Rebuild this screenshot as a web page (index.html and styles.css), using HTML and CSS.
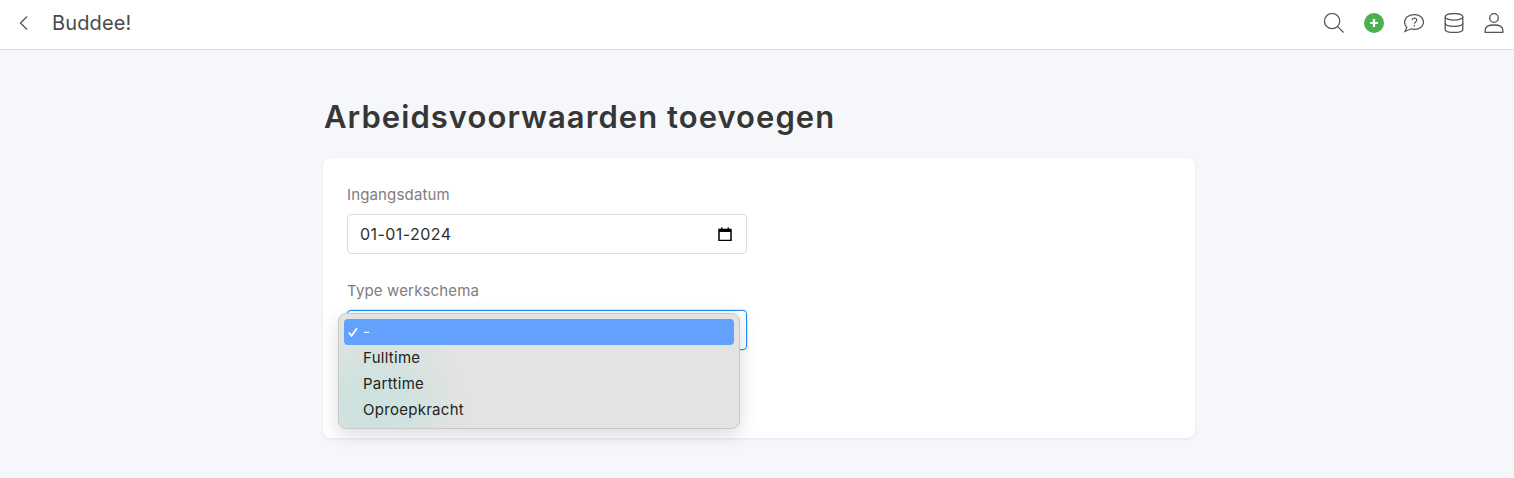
FILE: index.html
```html
<!DOCTYPE html>
<html lang="nl">
<head>
    <meta charset="UTF-8">
    <meta name="viewport" content="width=device-width, initial-scale=1.0">
    <title>Arbeidsvoorwaarden toevoegen</title>
    <link rel="stylesheet" href="styles.css">
</head>
<body>
    <header class="topbar">
        <div class="topbar-left">
            <svg class="back-icon" width="12" height="16" viewBox="0 0 12 16" fill="none" stroke="#555" stroke-width="1.3"><path d="M9 1.500 2.500 8 9 14.500"/></svg>
            <span class="app-name">Buddee!</span>
        </div>
        <div class="topbar-icons">
            <svg viewBox="2 2 21 21" fill="none" stroke="#555" stroke-width="1.3"><circle cx="10.500" cy="10.500" r="8"/><path d="M16.300 16.300 22.500 22.500"/></svg>
            <svg viewBox="2 2 20 20"><circle cx="12" cy="12" r="10" fill="#4caf50"/><path d="M12 8v8M8 12h8" stroke="#fff" stroke-width="2.2"/></svg>
            <svg viewBox="2 2 20 20" fill="none" stroke="#555" stroke-width="1.2"><path d="M12.500 3.700c5.300 0 9 3.200 9 7.300s-3.700 7.300-9 7.300c-1.200 0-2.300-.2-3.300-.5L3 20.500l1.800-4.300C3.400 14.800 2.500 13 2.500 11c0-4.100 4.200-7.300 10-7.300z"/><path d="M10 9.200c.2-1.300 1.200-2 2.400-2 1.300 0 2.300.8 2.300 2 0 1.700-2.300 1.800-2.300 3.600"/><path d="M12.400 14v1.400"/></svg>
            <svg viewBox="2 2 20 20" fill="none" stroke="#555" stroke-width="1.3"><ellipse cx="12" cy="5.800" rx="8.800" ry="3.300"/><path d="M3.200 5.800v12.400c0 2 3.900 3.300 8.800 3.300s8.800-1.300 8.800-3.300V5.800"/><path d="M3.200 12c0 2 3.900 3.300 8.800 3.300s8.800-1.300 8.800-3.300"/></svg>
            <svg viewBox="2 2 20 20" fill="none" stroke="#555" stroke-width="1.3"><circle cx="12" cy="7" r="4.300"/><path d="M3.200 21.500v-2.500c0-3 3.300-5 8.800-5s8.800 2 8.800 5v2.500z"/></svg>
        </div>
    </header>

    <main class="content">
        <h1 class="page-title">Arbeidsvoorwaarden toevoegen</h1>
        <section class="card">
            <div class="form-group">
                <label class="form-label">Ingangsdatum</label>
                <div class="form-control">
                    <span>01-01-2024</span>
                    <svg width="14" height="14" viewBox="0 0 14 14"><path d="M1 2.500h12v11H1z" fill="none" stroke="#000" stroke-width="1.500"/><path d="M1 2h12v3H1zM3 .5h1.500V2H3zM9.500 .5H11V2H9.500z" fill="#000"/></svg>
                </div>
            </div>
            <div class="form-group">
                <label class="form-label">Type werkschema</label>
                <div class="form-control is-focused">
                    <ul class="select-menu">
                        <li class="select-option is-selected">
                            <svg class="check" width="10" height="10" viewBox="0 0 10 10" fill="none" stroke="#fff" stroke-width="1.700"><path d="M.8 5.500 3.600 8.800 9 1.200"/></svg>
                            -
                        </li>
                        <li class="select-option">Fulltime</li>
                        <li class="select-option">Parttime</li>
                        <li class="select-option">Oproepkracht</li>
                    </ul>
                </div>
            </div>
        </section>
    </main>
</body>
</html>
```
FILE: styles.css
```css
* {
    box-sizing: border-box;
}
html, body {
    height: 100%;
}
body {
    margin: 0;
    background: #f6f7fb;
    color: #333;
    font-family: Inter, "Liberation Sans", sans-serif;
    overflow: hidden;
}
.topbar {
    display: flex;
    align-items: center;
    justify-content: space-between;
    height: 50px;
    padding: 0 10px 3px 18px;
    background: #fff;
    border-bottom: 1px solid #dcdcde;
}
.topbar-left {
    display: flex;
    align-items: center;
    gap: 22px;
}
.app-name {
    font-size: 20px;
    letter-spacing: 0.15px;
    color: #4a4a4a;
}
.topbar-icons {
    display: flex;
    align-items: center;
    gap: 20px;
}
.topbar-icons svg {
    display: block;
    width: 20px;
    height: 20px;
}
.content {
    width: 872px;
    margin-left: 323px;
    padding-top: 50px;
}
.page-title {
    margin: 0 0 24px 1px;
    font-size: 31px;
    line-height: 34px;
    font-weight: 600;
    letter-spacing: 1.05px;
    color: #363636;
}
.card {
    height: 280px;
    padding: 26px 24px;
    background: #fff;
    border-radius: 8px;
    box-shadow: 0 1px 3px rgba(0,0,0,0.07);
}
.form-group {
    width: 400px;
    margin-bottom: 26px;
}
.form-label {
    display: block;
    margin-bottom: 8px;
    font-size: 15px;
    line-height: 22px;
    letter-spacing: 0.15px;
    color: #7d7d7d;
}
.form-control {
    position: relative;
    display: flex;
    align-items: center;
    justify-content: space-between;
    height: 40px;
    padding: 0 14px 0 12px;
    background: #fff;
    border: 1px solid #dcdcdc;
    border-radius: 4px;
    font-size: 16px;
    letter-spacing: 0.45px;
    color: #2f2f2f;
}
.is-focused {
    border: 1px solid #1e90ff;
    box-shadow: 0 0 0 1px rgba(30,144,255,0.2);
}
.select-menu {
    position: absolute;
    top: 2px;
    left: -10px;
    width: 402px;
    height: 116px;
    margin: 0;
    padding: 5px;
    list-style: none;
    background: radial-gradient(circle at 35px 95px, #cbe2df 0, #d2e2df 40px, #e3e3e1 92px);
    border: 1px solid #c8c8c6;
    border-radius: 8px;
    box-shadow: 0 6px 18px rgba(0,0,0,0.14);
}
.select-option {
    position: relative;
    height: 26px;
    padding-left: 19px;
    border-radius: 4px;
    font-size: 15px;
    line-height: 26px;
    letter-spacing: 0.28px;
    color: #222;
}
.is-selected {
    background: #63a1ff;
    color: #fff;
}
.check {
    position: absolute;
    left: 4px;
    top: 8px;
}
```
